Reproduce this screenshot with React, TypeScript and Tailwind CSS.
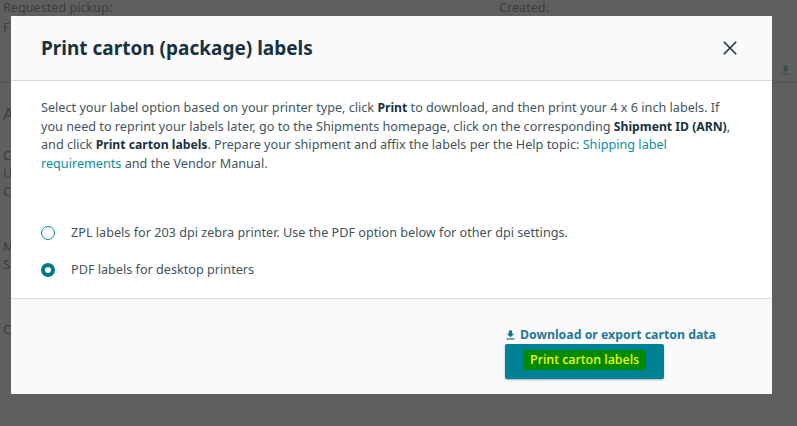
import React from 'react';

const DownloadIcon: React.FC<{ className?: string }> = ({ className }) => (
  <svg viewBox="0 0 10 11" className={className} fill="currentColor">
    <path d="M3.2 0.5h3.6v3.6h2.4L5 8 0.8 4.1h2.4z" />
    <rect x="0.5" y="9.2" width="9" height="1.3" />
  </svg>
);

const App: React.FC = () => {
  return (
    <div className="relative w-[797px] h-[426px] overflow-hidden bg-[#5f5f5f] font-['Noto_Sans',sans-serif] text-[12.65px] text-[#3d3d3d]">
      {/* page behind the overlay */}
      <div className="flex pl-[3px] h-[83px] border-b border-[#515151]">
        <div className="w-[496px] leading-[14px]">
          <p>Requested pickup:</p>
          <p className="mt-[6px]">F</p>
        </div>
        <div className="flex-1 flex justify-between">
          <p className="leading-[14px]">Created:</p>
          <DownloadIcon className="w-[9px] h-[10px] mt-[65px] mr-[7px] text-[#3a4a50]" />
        </div>
      </div>
      <div className="pl-[3px]">
        <p className="mt-[21px] text-[17px] leading-[20px]">A</p>
        <p className="mt-[22px] leading-[18px]">C</p>
        <p className="leading-[18px]">U</p>
        <p className="leading-[18px]">C</p>
        <p className="mt-[37px] leading-[18px]">M</p>
        <p className="leading-[18px]">S</p>
        <p className="mt-[47px] leading-[18px]">C</p>
      </div>

      {/* modal */}
      <div className="absolute left-[11px] top-[16px] w-[761px] h-[378px] flex flex-col bg-white">
        <div className="h-[65px] shrink-0 flex items-center justify-between pl-[30px] pr-[35px] bg-[#fafafa] border-b border-[#d5dbdb]">
          <h2 className="text-[19px] font-bold text-[#16313f] leading-[24px] -mt-[1px]">Print carton (package) labels</h2>
          <svg viewBox="0 0 14 14" className="w-[14px] h-[14px] text-[#16313f] -mt-[1px]" fill="none" stroke="currentColor" strokeWidth="1.6">
            <path d="M0.8 0.8l12.4 12.4M13.2 0.8L0.8 13.2" />
          </svg>
        </div>

        <div className="h-[218px] shrink-0 px-[30px] pt-[17px] border-b border-[#d9dddd] text-[#3f5560]">
          <p className="leading-[18.7px] w-[695px]">
            Select your label option based on your printer type, click <b className="text-[12.2px] leading-none text-[#16313f]">Print</b> to download, and then print your 4 x 6 inch labels. If you need to reprint your labels later, go to the Shipments homepage, click on the corresponding <b className="text-[12.2px] leading-none text-[#16313f]">Shipment ID (ARN)</b>, and click <b className="text-[12.2px] leading-none text-[#16313f]">Print carton labels</b>. Prepare your shipment and affix the labels per the Help topic: <a className="text-[#0a8ea0]">Shipping label requirements</a> and the Vendor Manual.
          </p>
          <div className="mt-[51px] flex flex-col gap-[19px]">
            <label className="flex items-center gap-[16px] h-[18px]">
              <span className="w-[14px] h-[14px] rounded-full border border-[#00889c] bg-white" />
              <span>ZPL labels for 203 dpi zebra printer. Use the PDF option below for other dpi settings.</span>
            </label>
            <label className="flex items-center gap-[16px] h-[18px]">
              <span className="w-[14px] h-[14px] rounded-full border-[4px] border-[#00788c] bg-white" />
              <span>PDF labels for desktop printers</span>
            </label>
          </div>
        </div>

        <div className="flex-1 bg-[#fafafa] flex flex-col items-start pl-[494px] pt-[27px]">
          <a className="flex items-center gap-[5px] pl-[1px] text-[12.3px] font-bold leading-[17px] text-[#21799a]">
            <DownloadIcon className="w-[9px] h-[10px] text-[#1a6f85]" />
            Download or export carton data
          </a>
          <button className="mt-[1px] w-[159px] h-[35px] rounded-[2px] bg-[#008296] shadow-[0_1px_2px_rgba(0,0,0,0.3)] flex items-center pl-[18px]">
            <span className="bg-[#008a00] text-[#f5ff00] text-[12.5px] font-medium leading-[18px] px-[7px] py-[1px] -mt-[3px]">Print carton labels</span>
          </button>
        </div>
      </div>
    </div>
  );
};

export default App;
